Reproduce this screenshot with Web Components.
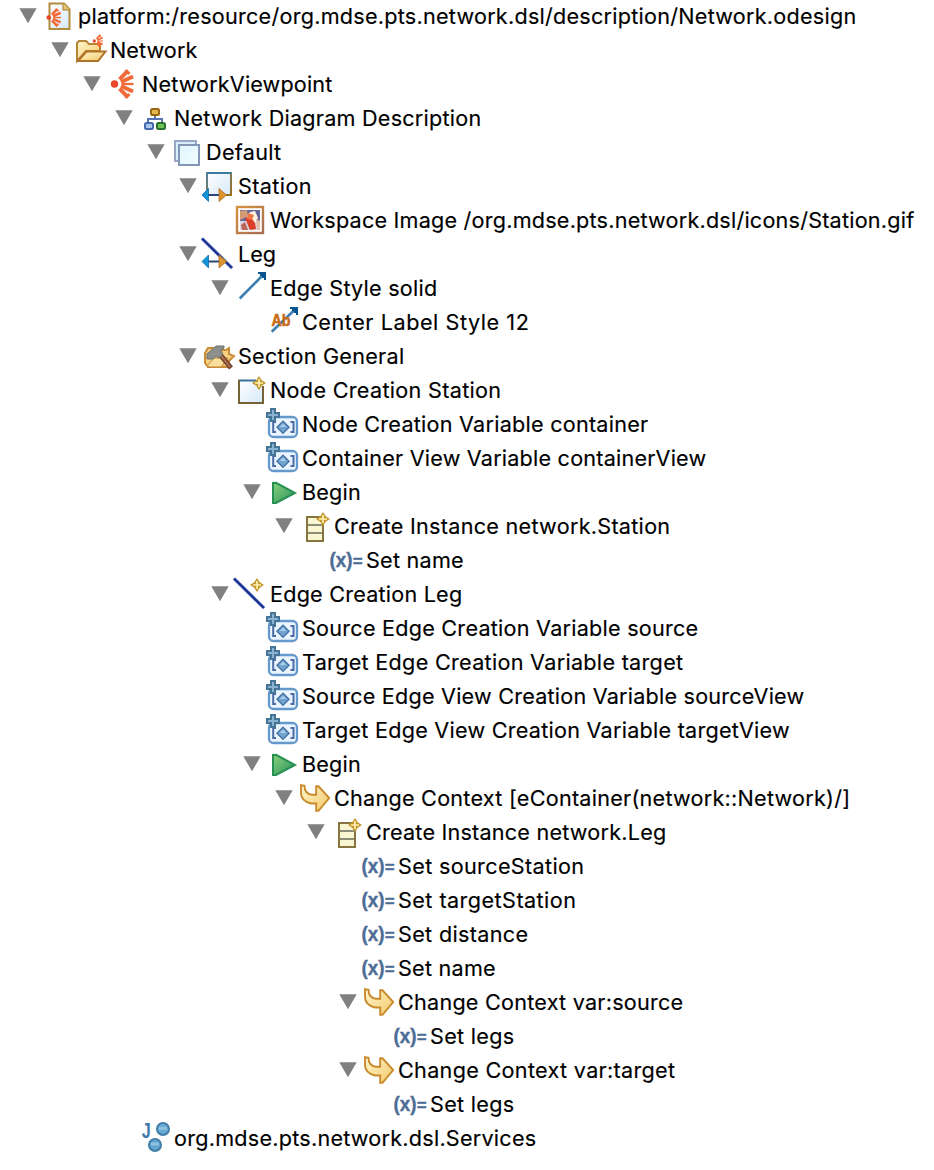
<!DOCTYPE html>
<html lang="en">
<head>
<meta charset="utf-8">
<title>Network.odesign</title>
<style>
html,body{margin:0;background:#fff}
body{width:934px;height:1170px;overflow:hidden;font-family:Inter,"Noto Sans","Liberation Sans",sans-serif;color:#000}
</style>
</head>
<body>
<model-tree></model-tree>
<script>
const star = (x, y) => `<path d="M${x} ${y-7}l2.8 4.2L${x+7} ${y}l-4.2 2.8L${x} ${y+7}l-2.8-4.2L${x-7} ${y}l4.2-2.8z" fill="#c2972f"/><path d="M${x} ${y-4}V${y+4}M${x-4} ${y}H${x+4}" stroke="#fff0b0" stroke-width="1.7"/>`;
const rays = (s, x, y) => `<g transform="translate(${x} ${y}) scale(${s})"><circle cx="4" cy="15.5" r="3.7" fill="#e9472c"/><g stroke="#f26a38" fill="none"><path d="M9 10.8L16.5 3.2M9 20.2l7.5 7.6" stroke-width="4"/><path d="M15 1.5l4 4M15 29.5l4-4" stroke-width="3"/><path d="M10.5 13.5L22.5 8M10.5 17.5l12 5.5" stroke-width="4"/><path d="M11 15.5h12" stroke-width="2.3"/></g></g>`;
const ends = y => `<path d="M2 ${y}h15" stroke="#2c477f" stroke-width="2"/><path d="M-4 ${y}L2.5 ${y-6.5}V${y+6.5}z" fill="#1295d8" stroke="#1269ab" stroke-width=".8"/><path d="M20.5 ${y}L13 ${y-6.5}V${y+6.5}z" fill="#db962f" stroke="#a96d1e" stroke-width=".8"/>`;
const ICONS = {
  file: `<path d="M3.5 3.5H18l5.5 6V29h-20z" fill="url(#page)" stroke="#b28b3c" stroke-width="2"/><path d="M17 3v7h7" fill="#e6c672" stroke="#a67b2c"/>` + rays(.64, .2, 7.6),
  folder: `<path d="M-1 27V9l2-2h7l3 3h11v7H8z" fill="url(#gold)" stroke="#b88436" stroke-width="2"/><path d="M0 27l8.5-9.5H27.5L20 27z" fill="url(#gold)" stroke="#b07329" stroke-width="2"/>` + rays(.45, 14.5, 0),
  viewpoint: rays(1, .5, .5),
  diagram: `<path d="M13 13v4M6 21v-4h14v4" fill="none" stroke="#5673b4" stroke-width="2"/><rect x="9" y="7" width="8" height="6" rx="1.5" fill="#e3b84f" stroke="#97660f" stroke-width="2"/><rect x="3" y="21" width="8" height="6" rx="1.5" fill="#a9c6e9" stroke="#4569ad" stroke-width="2"/><rect x="15" y="21" width="8" height="6" rx="1.5" fill="#71c052" stroke="#28702e" stroke-width="2"/>`,
  layer: `<path d="M1 5h21v20H1z" fill="#d5effb" stroke="#96a6c3" stroke-width="2"/><path d="M5 9h20v20H5z" fill="url(#sky)" stroke="#8497b9" stroke-width="2"/>`,
  node: `<path d="M1 3h24v22H1z" fill="url(#page)"/><path d="M0 3h26" stroke="#377b9e" stroke-width="2"/><path d="M1 3v22h24V3" fill="none" stroke="url(#edge)" stroke-width="2"/>` + ends(25),
  image: `<rect x="-1" y="3" width="26" height="26" fill="#fff" stroke="url(#frame)" stroke-width="2.4"/><path d="M2 6h20v20H2z" fill="#dbd4e5"/><path d="M2 6h20v11H2z" fill="#65669a"/><path d="M2 7l7-1 1 6-8 4z" fill="#d49a74"/><path d="M8 14l4-6 5-1 3 7-3 5-6-2z" fill="#fff3de"/><path d="M7 14l5-2 5 7 1 6-6 1z" fill="#dc3e27"/><path d="M10 9l6 2-2 5-5-1z" fill="#ed7545"/><path d="M3 21l4-3 3 8H4z" fill="#bb6559"/><path d="M18 15l4 2v9h-3z" fill="#e5c0ab"/>`,
  edge: `<path d="M-4 .5L26 30" stroke="#9aa8d7" stroke-width="3.6"/><path d="M-4 .5L26 30" stroke="#142f91" stroke-width="2.3"/>` + ends(23.5),
  arrow: `<path d="M1.7 26.5L24 4" stroke="#3d7faf" stroke-width="2.6"/><path d="M20 0h8v8h-2V6h-2V4h-2V2h-2z" fill="#075491"/>`,
  label: `<path d="M1.7 25.7L25 3.5" stroke="#3d7faf" stroke-width="2.6"/><path d="M20 1h8v8h-2V7h-2V5h-2V3h-2z" fill="#075491"/><text x="1.5" y="19.6" font-family="Liberation Sans" font-size="16" font-weight="700" textLength="19" lengthAdjust="spacingAndGlyphs" fill="#c96b18" stroke="#c96b18" stroke-width=".6">Ab</text>`,
  section: `<path d="M-1 13l3-5h6l3 2h9l3-2v6l5 2-5 5v6H2l-3-4z" fill="#f6d183" stroke="#c98d38" stroke-width="2"/><path d="M1 26l7-8h14l-7 9H4z" fill="#fbdf9c" stroke="#c18632"/><path d="M12 12l13 16" stroke="#75422f" stroke-width="5"/><path d="M13 13l11 14" stroke="#aa7352" stroke-width="2"/><path d="M1 19v-5l9-8h8v2l-3 3 2 3-4 4-3-2-3 3z" fill="#8d8f8d" stroke="#6d706d"/>`,
  nodeCreate: `<path d="M1 7h24v22H1z" fill="url(#page)"/><path d="M0 6.5h18" stroke="#376f96" stroke-width="2"/><path d="M1 6v23h24V12" fill="none" stroke="#756337" stroke-width="2"/>` + star(21, 9),
  variable: `<rect x="-1" y="9" width="28" height="20" rx="4.5" fill="#eaf5ff" stroke="#6598cb" stroke-width="2.3"/><path d="M6 14H3.2v10H6M20.5 14h3v10h-3" fill="none" stroke="#4a6ba5" stroke-width="2"/><path d="M13 13.2l6 6-6 6-6-6z" fill="#71a3cf" stroke="#4a76a8" stroke-width="1.5"/><path d="M13 15.5l3.2 3.5H9.7z" fill="#a9cfe9"/><path d="M1 1h4v4h4v4H5v4H1V9h-4V5h4z" fill="#8bb3d1" stroke="#467496" stroke-width="2"/>`,
  begin: `<path d="M3 7l3-.2L25 17 6 27H3z" fill="url(#green)" stroke="#269052" stroke-width="2"/>`,
  instance: `<path d="M5 7h16v24H5z" fill="#f8f7d2" stroke="#87743f" stroke-width="2"/><path d="M6 15h14M6 23h14" stroke="#8c8d76" stroke-width="2"/>` + star(21, 9),
  assign: `<text x="-4.6" y="23" font-family="Liberation Sans" font-size="19.5" font-weight="700" textLength="23" lengthAdjust="spacingAndGlyphs" fill="#4d6c96" stroke="#4d6c96" stroke-width=".4">(x)</text><text x="18.7" y="23.2" font-family="Liberation Sans" font-size="17" font-weight="700" fill="#4d6c96" stroke="#4d6c96" stroke-width=".3">=</text>`,
  edgeCreate: `<path d="M-4 .5L26 30" stroke="#9aa8d7" stroke-width="3.6"/><path d="M-4 .5L26 30" stroke="#142f91" stroke-width="2.3"/>` + star(19, 7),
  context: `<path d="M-1 3.2l3.5.5q0 8 7.5 9h4.2V4.3h2.3L27.2 16 16.5 28.8h-2.3V21.5H9Q-1 19-1 11z" fill="url(#gold)" stroke="#c88a2c" stroke-width="1.9"/>`,
  java: `<text x="-.3" y="16" font-family="Liberation Sans" font-size="22" font-weight="700" textLength="9" lengthAdjust="spacingAndGlyphs" fill="#3d78aa">J</text><circle cx="21" cy="7" r="6" fill="#6aa9d0" stroke="#407da8" stroke-width="2"/><path d="M17 6.5h8" stroke="#8cc2e0" stroke-width="3"/><circle cx="13" cy="23" r="6" fill="#62a4cd" stroke="#407da8" stroke-width="2"/><path d="M9 22h8" stroke="#8cc2e0" stroke-width="3"/>`
};
const grad = (id, a, b) => `<linearGradient id="${id}" x1="0" y1="0" x2="1" y2="1"><stop stop-color="${a}"/><stop offset="1" stop-color="${b}"/></linearGradient>`;
const DEFS = '<defs>' + grad('page','#ffffff','#d6e8fa') + grad('gold','#fff6cf','#f3c968') + grad('sky','#e0f5ff','#f1fdff') + grad('edge','#55819a','#9a711f') + grad('frame','#d5923f','#a96d55') + grad('green','#8bcf7c','#26945a') + '</defs>';

customElements.define('tree-icon', class extends HTMLElement {
  connectedCallback() {
    this.attachShadow({mode:'open'}).innerHTML = `<style>:host{display:block;width:32px;height:32px;flex:none}svg{display:block;overflow:visible}</style><svg width="32" height="32" viewBox="0 0 32 32" aria-hidden="true">${DEFS}${ICONS[this.getAttribute('name')]}</svg>`;
  }
});
customElements.define('tree-row', class extends HTMLElement {
  connectedCallback() {
    const open = !this.hasAttribute('leaf');
    this.attachShadow({mode:'open'}).innerHTML = `<style>
      :host{display:flex;height:34px;align-items:flex-start;padding-left:calc(19px + 32px * var(--level));box-sizing:border-box}
      .toggle{flex:none;width:27px;height:32px}
      .toggle svg{display:block}
      .label{white-space:pre;font-size:21.6px;line-height:32px;-webkit-text-stroke:.15px #000}
    </style><div class="toggle">${open ? '<svg width="27" height="32"><path d="M.3 8.3h17.4L9 23.2z" fill="#808080"/></svg>' : ''}</div><tree-icon name="${this.getAttribute('icon')}"></tree-icon><span class="label"><slot></slot></span>`;
    this.style.setProperty('--level', this.getAttribute('level'));
    const label = this.shadowRoot.querySelector('.label');
    const want = this.getAttribute('extent') - 78 - 32 * this.getAttribute('level') + .4;
    label.style.letterSpacing = (want - label.getBoundingClientRect().width) / this.textContent.length + 'px';
  }
});
const ROWS = [
  [0,'file','platform:/resource/org.mdse.pts.network.dsl/description/Network.odesign',856],
  [1,'folder','Network',197],
  [2,'viewpoint','NetworkViewpoint',332],
  [3,'diagram','Network Diagram Description',481],
  [4,'layer','Default',281],
  [5,'node','Station',311.5],
  [6,'image','Workspace Image /org.mdse.pts.network.dsl/icons/Station.gif',914,1],
  [5,'edge','Leg',275.5],
  [6,'arrow','Edge Style solid',437],
  [7,'label','Center Label Style 12',529,1],
  [5,'section','Section General',404],
  [6,'nodeCreate','Node Creation Station',501],
  [7,'variable','Node Creation Variable container',648,1],
  [7,'variable','Container View Variable containerView',706,1],
  [7,'begin','Begin',360.5],
  [8,'instance','Create Instance network.Station',670],
  [9,'assign','Set name',463.5,1],
  [6,'edgeCreate','Edge Creation Leg',462],
  [7,'variable','Source Edge Creation Variable source',698,1],
  [7,'variable','Target Edge Creation Variable target',683,1],
  [7,'variable','Source Edge View Creation Variable sourceView',804,1],
  [7,'variable','Target Edge View Creation Variable targetView',789.5,1],
  [7,'begin','Begin',360.5],
  [8,'context','Change Context [eContainer(network::Network)/]',850],
  [9,'instance','Create Instance network.Leg',666],
  [10,'assign','Set sourceStation',584,1],
  [10,'assign','Set targetStation',576,1],
  [10,'assign','Set distance',528,1],
  [10,'assign','Set name',495.5,1],
  [10,'context','Change Context var:source',683],
  [11,'assign','Set legs',514,1],
  [10,'context','Change Context var:target',675],
  [11,'assign','Set legs',514,1],
  [3,'java','org.mdse.pts.network.dsl.Services',536,1]
];
customElements.define('model-tree', class extends HTMLElement {
  connectedCallback() {
    this.attachShadow({mode:'open'}).innerHTML = `<style>:host{display:flex;flex-direction:column}</style>` +
      ROWS.map(([l,i,t,e,leaf]) => `<tree-row level="${l}" icon="${i}" extent="${e}"${leaf ? ' leaf' : ''}>${t}</tree-row>`).join('');
  }
});
</script>
</body>
</html>
